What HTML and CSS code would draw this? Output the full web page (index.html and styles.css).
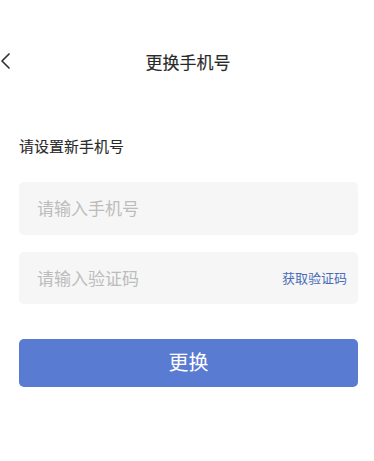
FILE: index.html
```html
<!DOCTYPE html>
<html>
	<head>
		<meta charset="UTF-8">
		<title>更换手机号</title>
		<link rel="stylesheet" href="styles.css">
	</head>
	<body>
		<div class="status"></div>
		<div class="header">
			<a class="back" href="#">
				<svg width="12" height="18" viewBox="0 0 12 18"><path d="M9 2 L2 9 L9 16" fill="none" stroke="#333" stroke-width="1.7" stroke-linecap="round" stroke-linejoin="round"/></svg>
			</a>
			<div class="title">更换手机号</div>
		</div>
		<div class="main">
			<p class="label">请设置新手机号</p>
			<div class="field">
				<input type="text" placeholder="请输入手机号" />
			</div>
			<div class="field">
				<input type="text" placeholder="请输入验证码" />
				<span class="code">获取验证码</span>
			</div>
			<button class="btn">更换</button>
		</div>
	</body>
</html>
```

FILE: styles.css
```css
body,div,p,input,button{margin:0;padding:0;}
body{font-family:"Noto Sans CJK SC","Liberation Sans",sans-serif;background:#fff;color:#333;}
.status{height:40px;}
.header{height:44px;display:flex;align-items:center;justify-content:center;position:relative;}
.header .back{position:absolute;left:0;top:12px;display:block;width:12px;height:18px;}
.header .back svg{display:block;}
.header .title{font-size:17px;color:#2a2a2a;line-height:24px;margin-left:2px;-webkit-text-stroke:0.15px #2a2a2a;}
.main{padding:0 16px 0 19px;}
.label{margin-top:51px;font-size:15px;line-height:21px;color:#2a2a2a;-webkit-text-stroke:0.1px #2a2a2a;}
.field{display:flex;align-items:center;height:53px;background:#f6f6f6;border-radius:5px;margin-top:26px;padding:0 11px 0 18px;}
.field + .field{margin-top:17px;height:52px;}
.field input{flex:1;min-width:0;border:0;outline:0;background:transparent;font-family:inherit;font-size:17px;color:#333;margin-top:-2px;}
.field input::placeholder{color:#bcbcbc;}
.code{font-size:13px;color:#4a6cb8;margin-top:-2px;}
.btn{display:block;width:100%;height:48px;margin-top:35px;border:0;border-radius:5px;background:#5a7bd2;color:#fff;font-family:inherit;font-size:20px;padding-bottom:3px;}
```
